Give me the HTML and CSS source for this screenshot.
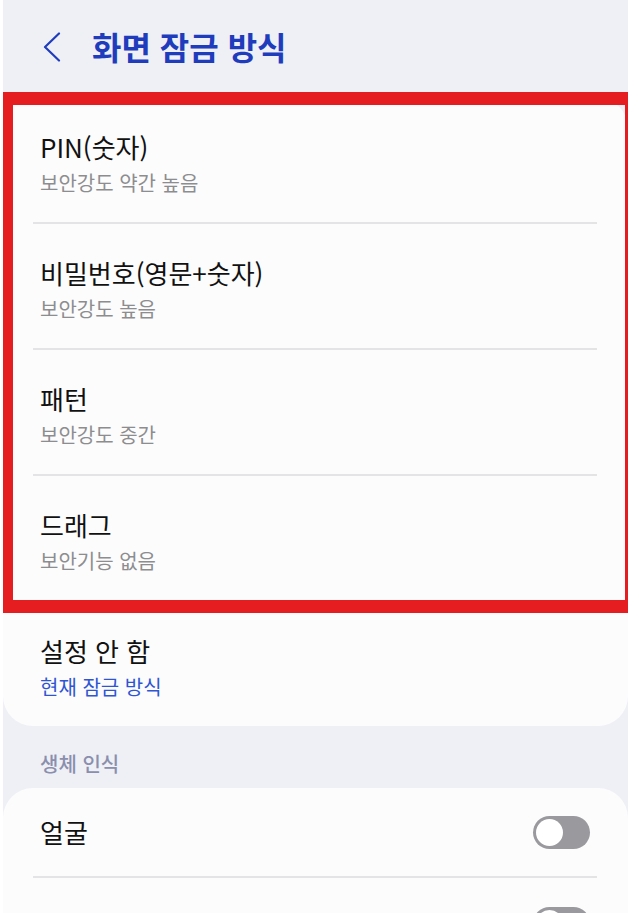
FILE: index.html
```html
<!DOCTYPE html>
<html lang="ko">
<head>
    <meta charset="UTF-8">
    <meta name="viewport" content="width=device-width, initial-scale=1.0">
    <title>화면 잠금 방식</title>
    <link rel="stylesheet" href="styles.css">
</head>
<body>
    <div class="screen">
        <div class="header">
            <svg class="back" width="18" height="30" viewBox="0 0 18 30">
                <polyline points="16,1.5 2,15 16,28.5" fill="none" stroke="#1f3cbd" stroke-width="2.2" stroke-linecap="round" stroke-linejoin="round"/>
            </svg>
            <h1>화면 잠금 방식</h1>
        </div>

        <div class="card">
            <div class="row">
                <div class="title">PIN(숫자)</div>
                <div class="sub">보안강도 약간 높음</div>
            </div>
            <div class="row">
                <div class="title">비밀번호(영문+숫자)</div>
                <div class="sub">보안강도 높음</div>
            </div>
            <div class="row">
                <div class="title">패턴</div>
                <div class="sub">보안강도 중간</div>
            </div>
            <div class="row">
                <div class="title">드래그</div>
                <div class="sub">보안기능 없음</div>
            </div>
            <div class="row">
                <div class="title">설정 안 함</div>
                <div class="sub current">현재 잠금 방식</div>
            </div>
        </div>

        <div class="section-label">생체 인식</div>

        <div class="card">
            <div class="row toggle-row">
                <div class="title">얼굴</div>
                <span class="switch"></span>
            </div>
            <div class="row toggle-row">
                <div class="title"></div>
                <span class="switch"></span>
            </div>
        </div>

        <!-- annotation box -->
        <div class="highlight"></div>
    </div>
</body>
</html>
```

FILE: styles.css
```css
html, body {
    margin: 0;
    padding: 0;
    background-color: #ffffff;
    font-family: "Noto Sans CJK KR", "Noto Sans", sans-serif;
}
.screen {
    position: relative;
    margin-left: 3px;
    width: 625px;
    height: 913px;
    overflow: hidden;
    background-color: #eff0f5;
}
.header {
    display: flex;
    align-items: center;
    height: 98px;
    padding-left: 40px;
    box-sizing: border-box;
}
.back {
    display: block;
    margin-top: -5px;
}
.header h1 {
    margin: -6px 0 0 31px;
    font-size: 32px;
    font-weight: 700;
    color: #1f3cbd;
}
.card {
    background-color: #fcfcfd;
    border-radius: 30px;
    padding: 0 31px 0 30px;
}
.row {
    padding: 33px 7px 26px;
    border-bottom: 2px solid #e4e4e7;
}
.row:last-child {
    border-bottom: none;
}
.title {
    font-size: 26px;
    line-height: 32px;
    color: #111111;
}
.sub {
    margin-top: 7px;
    font-size: 20px;
    line-height: 26px;
    color: #8d8d8f;
}
.sub.current {
    color: #2f55d4;
}
.section-label {
    padding: 26px 0 12px 37px;
    font-size: 20px;
    line-height: 24px;
    font-weight: 500;
    color: #8a8fae;
}
.toggle-row {
    display: flex;
    align-items: center;
    justify-content: space-between;
    height: 90px;
    padding: 0 7px;
    box-sizing: border-box;
}
.switch {
    position: relative;
    width: 57px;
    height: 33px;
    border-radius: 17px;
    background-color: #9a999e;
}
.switch::before {
    content: "";
    position: absolute;
    left: 3px;
    top: 3px;
    width: 27px;
    height: 27px;
    border-radius: 50%;
    background-color: #ffffff;
}
.highlight {
    position: absolute;
    left: -3px;
    top: 92px;
    width: 638px;
    height: 521px;
    border: 13px solid #e51d20;
    box-sizing: border-box;
}
```
